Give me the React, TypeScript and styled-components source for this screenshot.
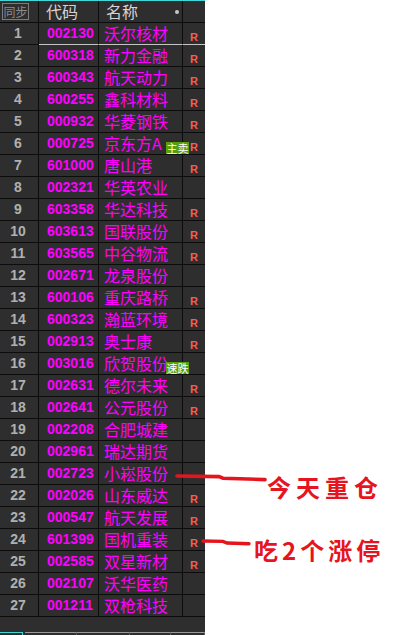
import React from "react"
import styled, { createGlobalStyle } from "styled-components"

const GlobalStyle = createGlobalStyle`
  html, body {
    margin: 0;
    padding: 0;
    background: #fff;
  }
  body {
    width: 400px;
    height: 635px;
    overflow: hidden;
    font-family: "Liberation Sans", "Noto Sans CJK SC", sans-serif;
  }
`

const Page = styled.div`
  position: relative;
  display: flex;
  width: 400px;
  height: 635px;
  background: #fff;
`

const Board = styled.div`
  width: 205px;
  height: 635px;
  display: flex;
  flex-direction: column;
  box-sizing: border-box;
  background: #2e2e2e;
  border-top: 1px solid #3ed8d8;
`

const Row = styled.div`
  display: grid;
  grid-template-columns: 39px 60px 84px 22px;
  height: 22px;
  flex: none;
`

const Cell = styled.div<{ $last?: boolean; $selected?: boolean }>`
  box-sizing: border-box;
  height: 22px;
  border-bottom: 1px solid ${({ $selected }) => ($selected ? "#c4c4c4" : "#0c0c0c")};
  border-right: ${({ $last }) => ($last ? "none" : "1px solid #0c0c0c")};
  white-space: nowrap;
`

const HeadSync = styled(Cell)`
  display: flex;
  align-items: flex-start;
  padding: 2px 0 0 2px;
`

const SyncButton = styled.div`
  box-sizing: border-box;
  width: 27px;
  height: 17px;
  border: 1px solid #7c7c7c;
  color: #8c8c8c;
  font: 12px/15px "Noto Sans CJK SC", sans-serif;
  text-align: center;
`

const HeadLabel = styled(Cell)`
  display: flex;
  align-items: center;
  justify-content: space-between;
  padding: 0 3px 0 7px;
  color: #d4d4d4;
  font: 16px/21px "Noto Sans CJK SC", sans-serif;
`

const Dot = styled.span`
  width: 4px;
  height: 4px;
  border-radius: 50%;
  background: #c8c8c8;
`

const NumCell = styled(Cell)`
  padding-right: 2px;
  text-align: center;
  color: #b0b0b0;
  font: 700 14px/21px "Liberation Sans", sans-serif;
`

const CodeCell = styled(Cell)`
  padding-left: 8px;
  color: #ff00ff;
  font: 700 14px/21px "Liberation Sans", sans-serif;
`

const NameCell = styled(Cell)`
  position: relative;
  padding-left: 5px;
  color: #ff00ff;
  font: 16px/21px "Noto Sans CJK SC", sans-serif;
`

const FlagCell = styled(Cell)`
  text-align: center;
  color: #ff5a48;
  font: 700 11px/29px "Liberation Sans", sans-serif;
`

const Badge = styled.span`
  position: absolute;
  top: 9px;
  right: -7px;
  width: 23px;
  height: 12px;
  background: #5a9e0c;
  color: #fff;
  font: 11px/12px "Noto Sans CJK SC", sans-serif;
  text-align: center;
  z-index: 1;
`

const Filler = styled.div`
  flex: 1;
`

const Footer = styled.div`
  display: flex;
  height: 3px;
  flex: none;
`

const Tab = styled.div<{ $active?: boolean; $w: number }>`
  box-sizing: border-box;
  width: ${({ $w }) => $w}px;
  border-top: 1px solid ${({ $active }) => ($active ? "#3ed8d8" : "#9a9a9a")};
  border-right: 1px solid ${({ $active }) => ($active ? "#3ed8d8" : "#5a5a5a")};
  margin-right: ${({ $active }) => ($active ? 2 : 0)}px;
`

const Callout = styled.div<{ $x: number; $y: number }>`
  position: absolute;
  left: ${({ $x }) => $x}px;
  top: ${({ $y }) => $y}px;
  display: flex;
  align-items: flex-start;
`

const Note = styled.span<{ $size: number; $gap: number; $drop: number }>`
  margin-top: ${({ $drop }) => $drop}px;
  color: #e6141e;
  font: 700 ${({ $size }) => $size}px/1 "Noto Sans CJK SC", sans-serif;
  letter-spacing: ${({ $gap }) => $gap}px;
  white-space: nowrap;
`

type Stock = { code: string; name: string; r: boolean; tag?: string }

const stocks: Stock[] = [
  { code: "002130", name: "沃尔核材", r: true },
  { code: "600318", name: "新力金融", r: true },
  { code: "600343", name: "航天动力", r: true },
  { code: "600255", name: "鑫科材料", r: true },
  { code: "000932", name: "华菱钢铁", r: true },
  { code: "000725", name: "京东方A", r: true, tag: "主卖" },
  { code: "601000", name: "唐山港", r: true },
  { code: "002321", name: "华英农业", r: false },
  { code: "603358", name: "华达科技", r: true },
  { code: "603613", name: "国联股份", r: true },
  { code: "603565", name: "中谷物流", r: true },
  { code: "002671", name: "龙泉股份", r: false },
  { code: "600106", name: "重庆路桥", r: true },
  { code: "600323", name: "瀚蓝环境", r: true },
  { code: "002913", name: "奥士康", r: true },
  { code: "003016", name: "欣贺股份", r: false, tag: "速跌" },
  { code: "002631", name: "德尔未来", r: true },
  { code: "002641", name: "公元股份", r: true },
  { code: "002208", name: "合肥城建", r: false },
  { code: "002961", name: "瑞达期货", r: false },
  { code: "002723", name: "小崧股份", r: false },
  { code: "002026", name: "山东威达", r: true },
  { code: "000547", name: "航天发展", r: true },
  { code: "601399", name: "国机重装", r: true },
  { code: "002585", name: "双星新材", r: true },
  { code: "002107", name: "沃华医药", r: false },
  { code: "001211", name: "双枪科技", r: false },
]

export default function App() {
  return (
    <Page>
      <GlobalStyle />
      <Board>
        <Row>
          <HeadSync>
            <SyncButton>同步</SyncButton>
          </HeadSync>
          <HeadLabel>代码</HeadLabel>
          <HeadLabel>
            名称
            <Dot />
          </HeadLabel>
          <Cell $last />
        </Row>
        {stocks.map((s, i) => (
          <Row key={s.code}>
            <NumCell>{i + 1}</NumCell>
            <CodeCell $selected={i === 0}>{s.code}</CodeCell>
            <NameCell $selected={i === 0}>
              {s.name}
              {s.tag && <Badge>{s.tag}</Badge>}
            </NameCell>
            <FlagCell $last $selected={i === 0}>
              {s.r ? "R" : ""}
            </FlagCell>
          </Row>
        ))}
        <Filler />
        <Footer>
          <Tab $active $w={23} />
          <Tab $w={52} />
          <Tab $w={53} />
          <Tab $w={41} />
          <Tab $w={34} />
        </Footer>
      </Board>

      <Callout $x={175} $y={472}>
        <svg width="92" height="12" viewBox="0 0 92 12">
          <path
            d="M2 4 L44 4.6 L48 6.2 L90 7.6"
            stroke="#e6141e"
            strokeWidth="3.6"
            strokeLinecap="round"
            fill="none"
          />
        </svg>
        <Note $size={24} $gap={5} $drop={3}>
          今天重仓
        </Note>
      </Callout>

      <Callout $x={201} $y={537}>
        <svg width="53" height="10" viewBox="0 0 53 10">
          <path
            d="M2 4 L22 4.4 L26 6 L48 6.8"
            stroke="#e6141e"
            strokeWidth="3.4"
            strokeLinecap="round"
            fill="none"
          />
        </svg>
        <Note $size={24} $gap={4} $drop={1}>
          吃2个涨停
        </Note>
      </Callout>
    </Page>
  )
}
